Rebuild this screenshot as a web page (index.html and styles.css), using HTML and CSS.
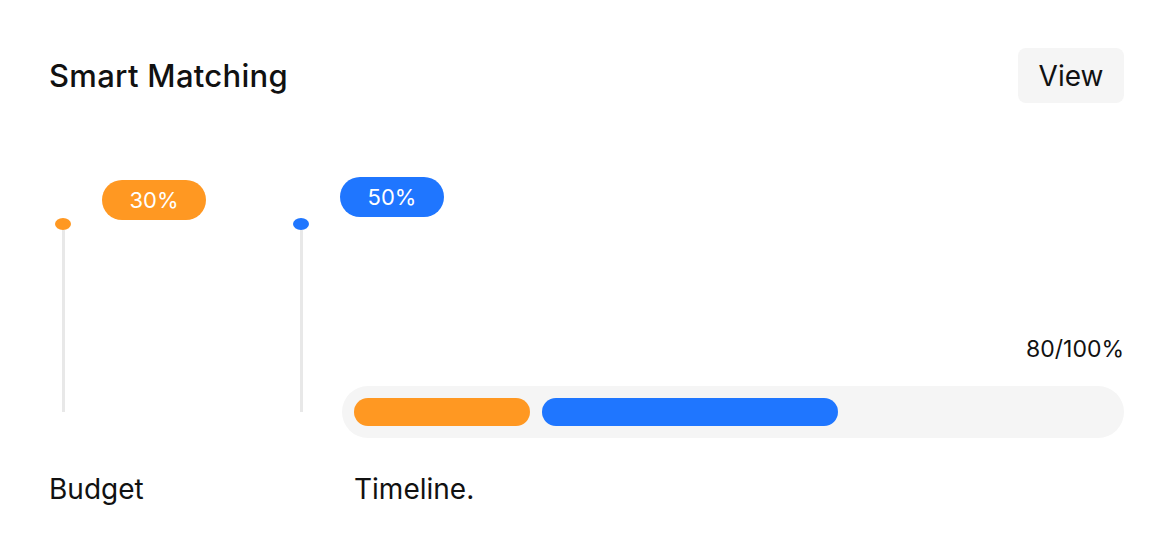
FILE: index.html
```html
<!DOCTYPE html>
<html>
<head>
<meta charset="utf-8">
<link rel="stylesheet" href="styles.css">
</head>
<body>
<div class="card">
  <div class="header">
    <h1 class="title">Smart Matching</h1>
    <button class="view-btn">View</button>
  </div>
  <div class="main">
    <div class="sliders">
      <div class="slider">
        <div class="dot orange-bg"></div>
        <div class="track"></div>
        <div class="badge orange-bg b1">30%</div>
      </div>
      <div class="slider">
        <div class="dot blue-bg"></div>
        <div class="track"></div>
        <div class="badge blue-bg b2">50%</div>
      </div>
    </div>
    <div class="progress">
      <div class="score">80/100%</div>
      <div class="bar-track">
        <div class="bar orange-bg" style="width:176px"></div>
        <div class="bar blue-bg" style="width:296px"></div>
      </div>
    </div>
  </div>
  <div class="labels">
    <div class="label l1">Budget</div>
    <div class="label l2">Timeline.</div>
  </div>
</div>
</body>
</html>
```
FILE: styles.css
```css
* { box-sizing: border-box; }
body {
  margin: 0;
  background: #fff;
  font-family: Inter, "Noto Sans", sans-serif;
  color: #111;
}
.card {
  width: 1174px;
  height: 554px;
  padding: 48px 50px 0 49px;
}
.header {
  display: flex;
  justify-content: space-between;
  align-items: center;
  height: 55px;
}
.title {
  margin: 0;
  font-size: 31px;
  font-weight: 500;
  line-height: 38px;
  letter-spacing: 0.3px;
}
.view-btn {
  width: 106px;
  height: 55px;
  border: none;
  border-radius: 8px;
  background: #f5f5f5;
  font-family: inherit;
  font-size: 28px;
  font-weight: 400;
  color: #111;
  padding: 0;
}
.main {
  display: flex;
  margin-top: 115px;
  height: 257px;
}
.sliders {
  width: 293px;
  display: flex;
  gap: 222px;
  padding-left: 6px;
}
.slider {
  position: relative;
  width: 16px;
  display: flex;
  flex-direction: column;
  align-items: center;
}
.dot {
  width: 16px;
  height: 12px;
  border-radius: 50%;
}
.orange-bg { background: #ff9822; }
.blue-bg { background: #1f76ff; }
.track {
  width: 3px;
  height: 182px;
  background: #e8e8e8;
}
.badge {
  position: absolute;
  left: 47px;
  width: 104px;
  height: 40px;
  border-radius: 20px;
  color: #fff;
  font-size: 22px;
  display: flex;
  align-items: center;
  justify-content: center;
}
.b1 { top: -38px; }
.b2 { top: -41px; }
.progress {
  flex: 1;
  display: flex;
  flex-direction: column;
  align-items: flex-end;
  padding-top: 118px;
}
.score {
  font-size: 23px;
  line-height: 30px;
  height: 30px;
  margin-top: -2px;
  margin-bottom: 2px;
}
.bar-track {
  margin-top: 20px;
  width: 100%;
  height: 52px;
  border-radius: 26px;
  background: #f5f5f5;
  padding: 12px;
  display: flex;
  gap: 12px;
}
.bar {
  height: 28px;
  border-radius: 14px;
}
.labels {
  display: flex;
}
.label {
  font-size: 28px;
  line-height: 28px;
}
.l1 { width: 305px; }
```
